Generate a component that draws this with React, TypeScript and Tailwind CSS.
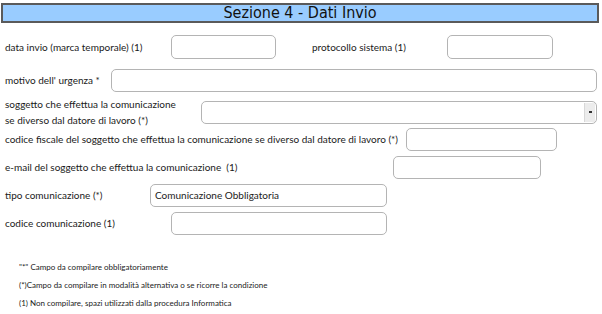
import type { ReactNode } from "react";

const font = { fontFamily: "Lato, 'Open Sans', sans-serif" };

function Field({ className, children }: { className: string; children?: ReactNode }) {
  return (
    <div
      className={`h-[23px] rounded-[5px] border border-[#b4b4b4] bg-white flex items-center px-[4px] text-[10px] text-[#222] ${className}`}
    >
      {children}
    </div>
  );
}

export default function App() {
  return (
    <div className="w-[602px] h-[314px] bg-white overflow-hidden text-[10px] text-[#1a1a1a]" style={font}>
      <div className="mt-[3px] ml-[1px] w-[598px] h-[20px] border-2 border-[#5a5a5a] bg-[#99ccff] flex items-center justify-center">
        <span
          className="text-[16px] text-[#111] leading-none"
          style={{ fontFamily: "'Liberation Sans Narrow', 'DejaVu Sans Condensed', sans-serif" }}
        >
          Sezione 4 - Dati Invio
        </span>
      </div>

      <div className="pl-[5px]">
        <div className="mt-[12px] flex items-center h-[24px]">
          <span className="w-[166px]">data invio (marca temporale) (1)</span>
          <Field className="w-[105px] h-[24px]" />
          <span className="ml-[36px] w-[135px]">protocollo sistema (1)</span>
          <Field className="w-[106px] h-[24px]" />
        </div>

        <div className="mt-[10px] flex items-center h-[22px]">
          <span className="w-[106px]">motivo dell' urgenza *</span>
          <Field className="w-[486px] h-[22px]" />
        </div>

        <div className="mt-[7px] flex items-center h-[28px]">
          <div className="w-[196px] leading-[16px]">
            <div>soggetto che effettua la comunicazione</div>
            <div>se diverso dal datore di lavoro (*)</div>
          </div>
          <div className="w-[396px] h-[23px] rounded-[5px] border border-[#b4b4b4] bg-white flex items-center justify-end pr-[1px]">
            <div className="w-[11px] h-[19px] bg-[#ececec] border-l border-[#d8d8d8] flex items-center justify-center">
              <div className="w-[3px] h-[2px] bg-[#333]" />
            </div>
          </div>
        </div>

        <div className="mt-[2px] flex items-center h-[23px]">
          <span className="w-[401px]">codice fiscale del soggetto che effettua la comunicazione se diverso dal datore di lavoro (*)</span>
          <Field className="w-[151px] h-[23px]" />
        </div>

        <div className="mt-[5px] flex items-center h-[23px]">
          <span className="w-[388px]">e-mail del soggetto che effettua la comunicazione&nbsp; (1)</span>
          <Field className="w-[148px] h-[23px]" />
        </div>

        <div className="mt-[5px] flex items-center h-[23px]">
          <span className="w-[145px]">tipo comunicazione (*)</span>
          <Field className="w-[237px] h-[23px]">Comunicazione Obbligatoria</Field>
        </div>

        <div className="mt-[5px] flex items-center h-[23px]">
          <span className="w-[166px]">codice comunicazione (1)</span>
          <Field className="w-[216px] h-[23px]" />
        </div>
      </div>

      <div className="mt-[27px] pl-[19px] text-[8px] text-[#222] flex flex-col gap-[8px] leading-[10px]">
        <div>"*" Campo da compilare obbligatoriamente</div>
        <div>(*)Campo da compilare in modalità alternativa o se ricorre la condizione</div>
        <div>(1) Non compilare, spazi utilizzati dalla procedura Informatica</div>
      </div>
    </div>
  );
}
